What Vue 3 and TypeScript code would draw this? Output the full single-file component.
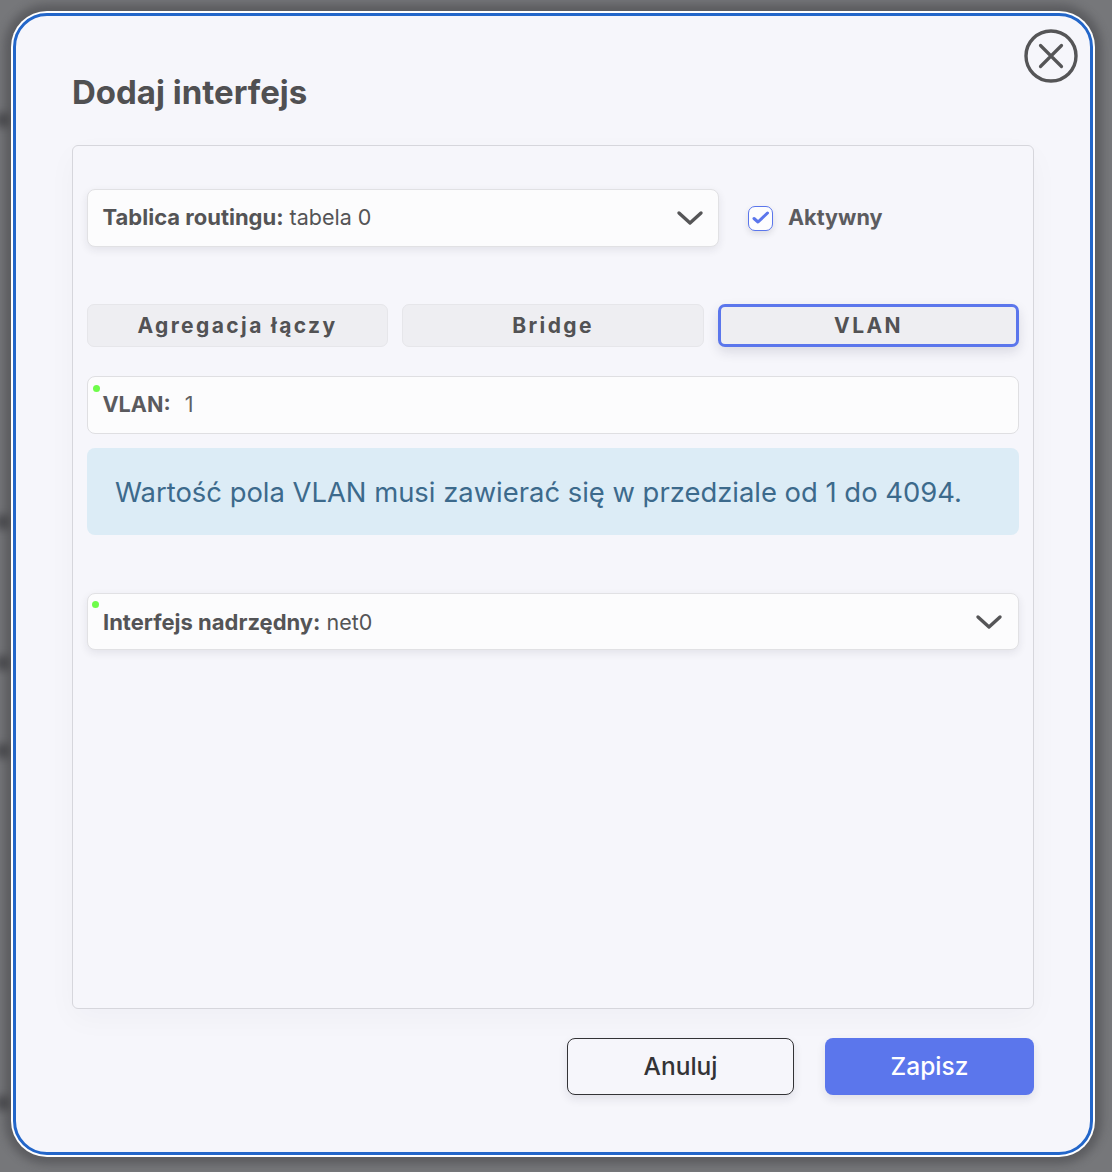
<script setup lang="ts">
const tabs: { label: string; active?: boolean }[] = [
  { label: 'Agregacja łączy' },
  { label: 'Bridge' },
  { label: 'VLAN', active: true },
]
const spots: number[] = [120, 522, 663, 751, 1103]
</script>

<template>
  <div class="backdrop">
    <i v-for="y in spots" :key="y" class="spot" :style="{ top: y - 7 + 'px' }" />
    <div class="modal">
      <button class="close" aria-label="close">
        <svg width="54" height="54" viewBox="0 0 54 54" fill="none" stroke="#555557" stroke-linecap="round">
          <circle cx="27" cy="27" r="25" stroke-width="3.4" />
          <path d="M16.5 16.5 L37.5 37.5 M37.5 16.5 L16.5 37.5" stroke-width="3.2" />
        </svg>
      </button>
      <h1 class="title">Dodaj interfejs</h1>
      <div class="panel">
        <div class="top-row">
          <div class="select routing">
            <span><b>Tablica routingu:</b> tabela 0</span>
            <svg class="chev" width="28" height="16" viewBox="0 0 28 16" fill="none" stroke="#555557" stroke-width="3.4" stroke-linecap="round" stroke-linejoin="round">
              <path d="M3 3 L14 13 L25 3" />
            </svg>
          </div>
          <label class="check">
            <span class="box">
              <svg width="18" height="14" viewBox="0 0 18 14" fill="none" stroke="#5b76ec" stroke-width="3" stroke-linecap="round" stroke-linejoin="round">
                <path d="M2 7.5 L6 11 L15.5 2" />
              </svg>
            </span>
            <span class="check-label">Aktywny</span>
          </label>
        </div>
        <div class="tabs">
          <button v-for="t in tabs" :key="t.label" class="tab" :class="{ active: t.active }">{{ t.label }}</button>
        </div>
        <div class="field vlan">
          <i class="dot" />
          <b>VLAN:</b><span class="val">1</span>
        </div>
        <div class="info">Wartość pola VLAN musi zawierać się w przedziale od 1 do 4094.</div>
        <div class="select parent">
          <i class="dot dot2" />
          <span><b>Interfejs nadrzędny:</b> net0</span>
          <svg class="chev" width="28" height="16" viewBox="0 0 28 16" fill="none" stroke="#555557" stroke-width="3.4" stroke-linecap="round" stroke-linejoin="round">
            <path d="M3 3 L14 13 L25 3" />
          </svg>
        </div>
      </div>
      <div class="actions">
        <button class="btn cancel">Anuluj</button>
        <button class="btn save">Zapisz</button>
      </div>
    </div>
  </div>
</template>

<style>
html, body { margin: 0; background: #76777a; }
</style>

<style scoped>
* { box-sizing: border-box; }
.backdrop {
  position: relative;
  width: 1112px;
  height: 1172px;
  padding: 13px 19px 17px 13px;
  background: #76777a;
  font-family: Inter, "Liberation Sans", sans-serif;
  color: #545456;
  overflow: hidden;
}
.spot {
  position: absolute;
  left: -4px;
  width: 14px;
  height: 14px;
  background: rgba(40, 40, 44, 0.55);
  filter: blur(4px);
}
.modal {
  position: relative;
  height: 1142px;
  background: #f6f6fb;
  border: 3px solid #2366c9;
  border-radius: 34px;
  box-shadow: 0 0 0 2px #fff, 0 0 8px 9px rgba(60, 60, 64, 0.45);
  padding: 0 56px;
}
.close {
  position: absolute;
  top: 13px;
  right: 12px;
  width: 54px;
  height: 54px;
  padding: 0;
  border: 0;
  background: none;
  display: block;
}
.title {
  margin: 0;
  padding-top: 57px;
  height: 129px;
  font-size: 33px;
  line-height: 38px;
  font-weight: 700;
  color: #505052;
}
.panel {
  height: 864px;
  border: 1px solid #d6d6dc;
  border-radius: 6px;
  padding: 43px 14px 0;
  box-shadow: 0 10px 30px rgba(30, 30, 60, 0.03);
}
.top-row {
  display: flex;
  align-items: center;
  gap: 29px;
}
.select {
  position: relative;
  display: flex;
  align-items: center;
  justify-content: space-between;
  background: #fcfcfd;
  border: 1px solid #e1e1e4;
  border-radius: 8px;
  box-shadow: 0 3px 8px rgba(30, 30, 50, 0.09);
  font-size: 21.5px;
  padding: 0 15px;
  color: #545456;
}
.select b { font-weight: 700; font-size: 22px; }
.field b { font-weight: 700; margin-left: -0.5px; }
.routing { width: 632px; height: 58px; padding: 0 14px 0 14.5px; }
.routing span { margin-top: -2px; }
.parent { height: 57px; margin-top: 58px; }
.chev { flex: none; }
.check { display: flex; align-items: center; gap: 15px; }
.box {
  width: 25px;
  height: 25px;
  border: 1px solid #5b76ec;
  border-radius: 7px;
  background: #fdfdfe;
  box-shadow: 0 3px 6px rgba(30, 30, 50, 0.12);
  display: flex;
  align-items: center;
  justify-content: center;
}
.check-label { font-size: 21.6px; line-height: 24px; font-weight: 700; color: #5c5c60; margin-top: -2px; }
.tabs {
  display: grid;
  grid-template-columns: 301px 302px 301px;
  gap: 14px;
  margin-top: 57px;
}
.tab {
  height: 43px;
  padding: 0;
  background: #eeeef2;
  border: 1px solid #e6e6ea;
  border-radius: 7px;
  font-family: inherit;
  font-size: 21px;
  font-weight: 700;
  letter-spacing: 2.4px;
  color: #525254;
}
.tab.active {
  border: 3px solid #5b76ec;
  box-shadow: 0 5px 12px rgba(30, 30, 60, 0.13);
}
.field {
  position: relative;
  display: flex;
  align-items: center;
  height: 58px;
  margin-top: 29px;
  padding: 0 15px 2px;
  background: #fcfcfd;
  border: 1px solid #dfdfe2;
  border-radius: 8px;
  font-size: 21.6px;
  color: #5a5a5e;
}
.val { margin-left: 14px; font-weight: 400; color: #606064; }
.dot {
  position: absolute;
  left: 5px;
  top: 8px;
  width: 7px;
  height: 7px;
  border-radius: 50%;
  background: #6efc4a;
}
.dot2 { left: 4px; top: 7px; }
.info {
  height: 87px;
  margin-top: 14px;
  padding: 0 28px;
  display: flex;
  align-items: center;
  background: #dcecf6;
  border-radius: 8px;
  color: #3c6a8c;
  font-size: 27.4px;
}
.actions {
  display: flex;
  justify-content: flex-end;
  gap: 31px;
  margin-top: 29px;
}
.btn {
  height: 57px;
  padding: 0 0 2px;
  border-radius: 8px;
  font-family: inherit;
  font-size: 24.5px;
  font-weight: 500;
  box-shadow: 0 4px 10px rgba(30, 30, 60, 0.1);
}
.cancel {
  width: 227px;
  background: #f6f6fb;
  border: 1px solid #333336;
  color: #333336;
}
.save {
  width: 209px;
  background: #5b76ec;
  border: 0;
  color: #fff;
}
</style>
